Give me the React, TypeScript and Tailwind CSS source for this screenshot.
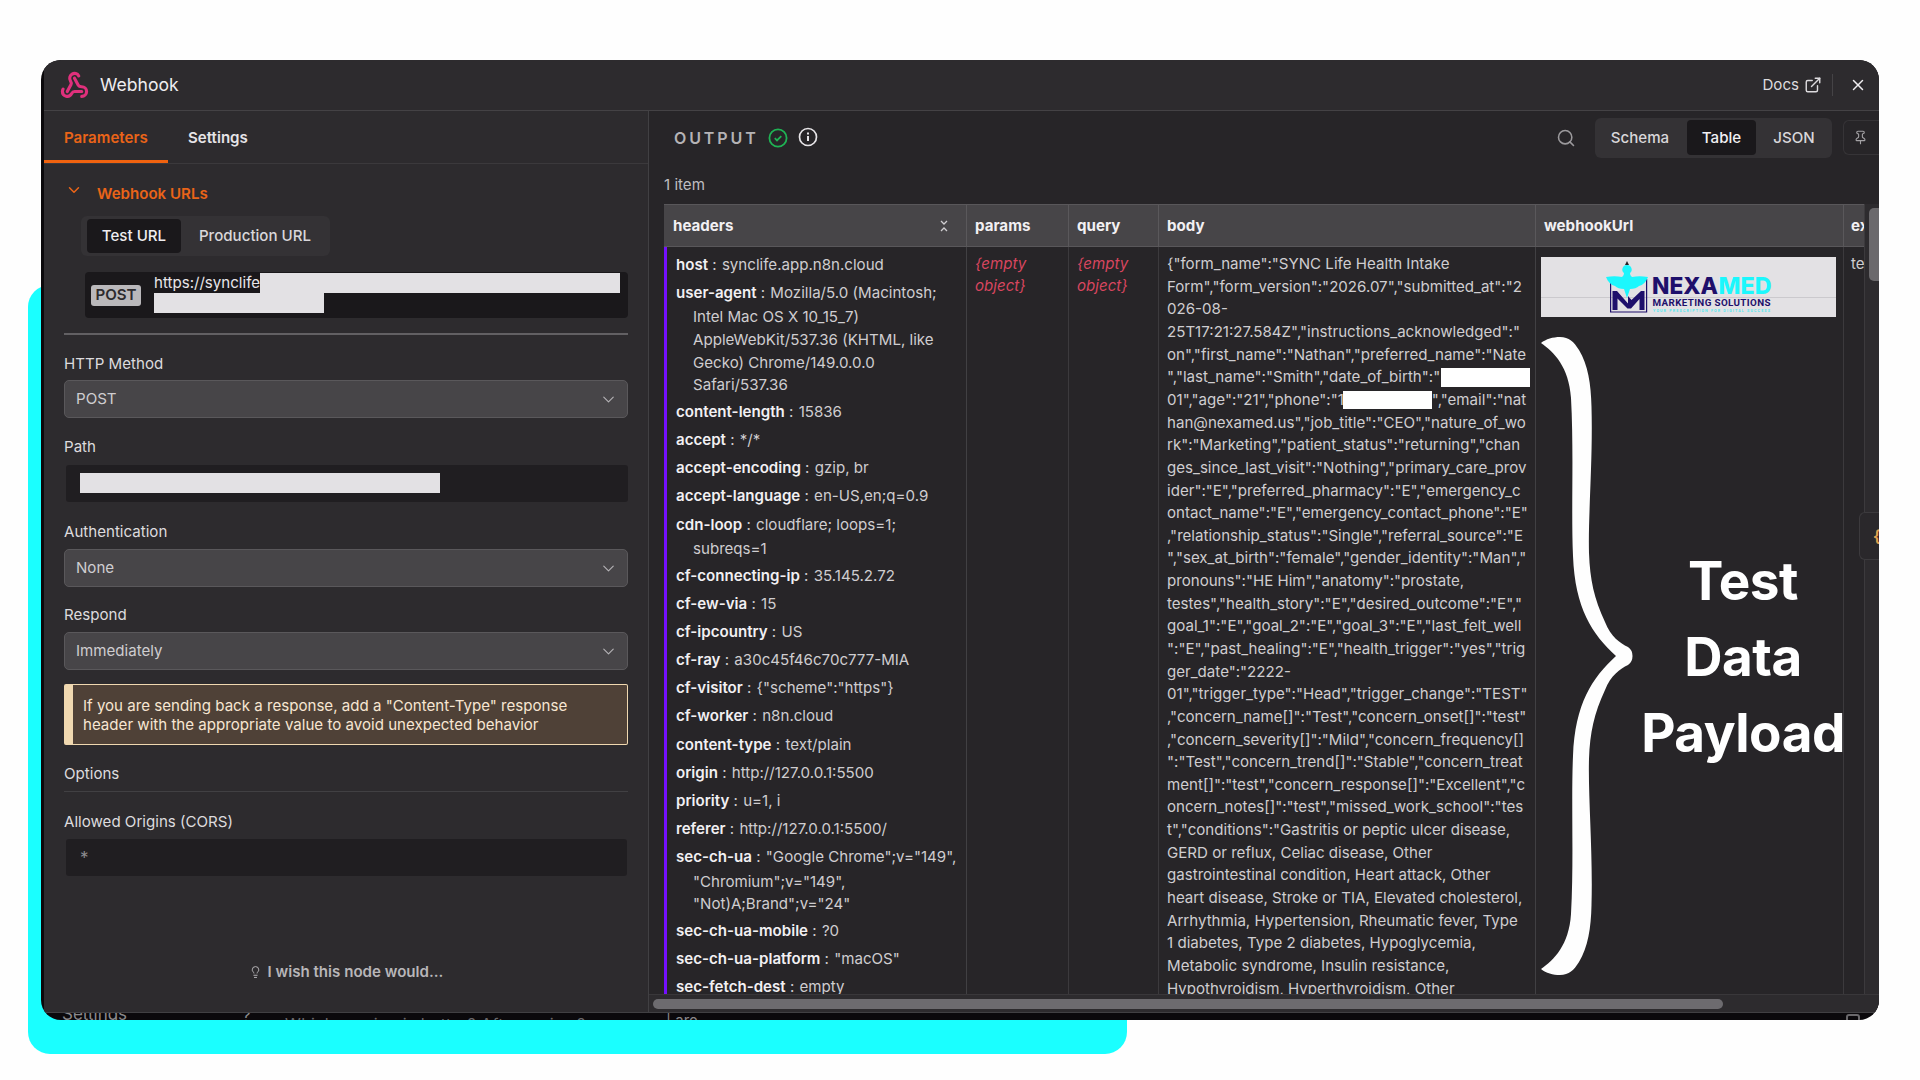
import type { ReactNode } from "react";
import { ChevronDown, ExternalLink, Lightbulb, Pin, Search, Webhook, X } from "lucide-react";
import clsx from "clsx";

const HEADERS: { key: string; lines: string[] }[] = [
  { key: "host", lines: ["synclife.app.n8n.cloud"] },
  { key: "user-agent", lines: ["Mozilla/5.0 (Macintosh;", "Intel Mac OS X 10_15_7)", "AppleWebKit/537.36 (KHTML, like", "Gecko) Chrome/149.0.0.0", "Safari/537.36"] },
  { key: "content-length", lines: ["15836"] },
  { key: "accept", lines: ["*/*"] },
  { key: "accept-encoding", lines: ["gzip, br"] },
  { key: "accept-language", lines: ["en-US,en;q=0.9"] },
  { key: "cdn-loop", lines: ["cloudflare; loops=1;", "subreqs=1"] },
  { key: "cf-connecting-ip", lines: ["35.145.2.72"] },
  { key: "cf-ew-via", lines: ["15"] },
  { key: "cf-ipcountry", lines: ["US"] },
  { key: "cf-ray", lines: ["a30c45f46c70c777-MIA"] },
  { key: "cf-visitor", lines: ['{"scheme":"https"}'] },
  { key: "cf-worker", lines: ["n8n.cloud"] },
  { key: "content-type", lines: ["text/plain"] },
  { key: "origin", lines: ["http://127.0.0.1:5500"] },
  { key: "priority", lines: ["u=1, i"] },
  { key: "referer", lines: ["http://127.0.0.1:5500/"] },
  { key: "sec-ch-ua", lines: ['"Google Chrome";v="149",', '"Chromium";v="149",', '"Not)A;Brand";v="24"'] },
  { key: "sec-ch-ua-mobile", lines: ["?0"] },
  { key: "sec-ch-ua-platform", lines: ['"macOS"'] },
  { key: "sec-fetch-dest", lines: ["empty"] },
];

const Redacted = ({ className }: { className: string }) => <span className={clsx("inline-block shrink-0", className)} />;

const BODY: ReactNode[] = [
  '{"form_name":"SYNC Life Health Intake',
  'Form","form_version":"2026.07","submitted_at":"2',
  "026-08-",
  '25T17:21:27.584Z","instructions_acknowledged":"',
  'on","first_name":"Nathan","preferred_name":"Nate',
  <>{'","last_name":"Smith","date_of_birth":"'}<Redacted className="ml-px h-[19px] w-[89px] bg-white" /></>,
  <>{'01","age":"21","phone":"1'}<Redacted className="-ml-px h-[18px] w-[89px] bg-white" />{'","email":"nat'}</>,
  'han@nexamed.us","job_title":"CEO","nature_of_wo',
  'rk":"Marketing","patient_status":"returning","chan',
  'ges_since_last_visit":"Nothing","primary_care_prov',
  'ider":"E","preferred_pharmacy":"E","emergency_c',
  'ontact_name":"E","emergency_contact_phone":"E"',
  ',"relationship_status":"Single","referral_source":"E',
  '","sex_at_birth":"female","gender_identity":"Man","',
  'pronouns":"HE Him","anatomy":"prostate,',
  'testes","health_story":"E","desired_outcome":"E","',
  'goal_1":"E","goal_2":"E","goal_3":"E","last_felt_well',
  '":"E","past_healing":"E","health_trigger":"yes","trig',
  'ger_date":"2222-',
  '01","trigger_type":"Head","trigger_change":"TEST"',
  ',"concern_name[]":"Test","concern_onset[]":"test"',
  ',"concern_severity[]":"Mild","concern_frequency[]',
  '":"Test","concern_trend[]":"Stable","concern_treat',
  'ment[]":"test","concern_response[]":"Excellent","c',
  'oncern_notes[]":"test","missed_work_school":"tes',
  't","conditions":"Gastritis or peptic ulcer disease,',
  "GERD or reflux, Celiac disease, Other",
  "gastrointestinal condition, Heart attack, Other",
  "heart disease, Stroke or TIA, Elevated cholesterol,",
  "Arrhythmia, Hypertension, Rheumatic fever, Type",
  "1 diabetes, Type 2 diabetes, Hypoglycemia,",
  "Metabolic syndrome, Insulin resistance,",
  "Hypothyroidism, Hyperthyroidism, Other",
];

function Label({ children, className }: { children: ReactNode; className: string }) {
  return <div className={clsx("flex h-5 items-center text-[#dddbde]", className)}>{children}</div>;
}

function Select({ value }: { value: string }) {
  return (
    <div className="flex h-[38px] items-center justify-between rounded-[5px] border border-[#5a585b] bg-[#474548] pr-[9px] pl-[11px] text-[#cfcdd0]">
      {value}
      <ChevronDown size={19} strokeWidth={1.4} className="text-[#b5b3b6]" />
    </div>
  );
}

function ParametersPanel() {
  return (
    <div className="flex w-[605px] shrink-0 flex-col border-r border-[#414043] bg-[#2d2b2e]">
      <div className="flex h-[53px] border-b border-[#3b393c] font-semibold">
        <div className="flex h-[52px] w-[124px] items-center border-b-[3px] border-[#f0620f] pt-1 pl-5 text-[#ea6418]">Parameters</div>
        <div className="flex h-[52px] items-center pt-px pl-5 text-[#e6e4e7]">Settings</div>
      </div>

      <div className="flex flex-col px-5">
        <div className="mt-5 flex h-5 items-center font-semibold text-[#ea6418]">
          <ChevronDown size={18} strokeWidth={2} className="mt-[-9px] ml-px" />
          <span className="ml-[14px]">Webhook URLs</span>
        </div>
        <div className="mt-3 ml-[17px] flex h-10 w-[249px] items-center rounded-md bg-[#343235] p-[6px] font-medium text-[#d9d7da]">
          <div className="flex h-[34px] w-[94px] items-center justify-center rounded bg-[#1a181b] text-[#efedf0]">Test URL</div>
          <div className="flex-1 pl-[5px] text-center">Production URL</div>
        </div>
        <div className="mt-4 ml-[21px] flex h-[46px] items-center rounded bg-[#1a181b] pl-[6px]">
          <div className="flex h-[21px] w-[50px] items-center justify-center rounded-[3px] bg-[#bab8bb] font-semibold text-[#2d2b2e]">POST</div>
          <div className="ml-[13px] h-full pt-px">
            <div className="flex h-5 items-center whitespace-pre text-[#e8e6e9]">
              https://synclife
              <Redacted className="h-5 w-[360px] bg-[#e3e1e4]" />
            </div>
            <div className="h-5 w-[170px] bg-[#e3e1e4]" />
          </div>
        </div>
        <div className="mt-[15px] h-[2px] bg-[#626063]" />

        <Label className="mt-[19px] mb-[6px]">HTTP Method</Label>
        <Select value="POST" />
        <Label className="mt-[19px] mb-2">Path</Label>
        <div className="ml-[2px] h-[37px] rounded-[3px] bg-[#201e21] pt-2 pl-[14px]">
          <div className="h-5 w-[360px] bg-[#e3e1e4]" />
        </div>
        <Label className="mt-5 mb-[7px]">Authentication</Label>
        <Select value="None" />
        <Label className="mt-[18px] mb-[7px]">Respond</Label>
        <Select value="Immediately" />

        <div className="mt-[14px] h-[61px] rounded-[2px] border border-l-[9px] border-[#f0d8b0] bg-[#4f4137] pt-[11px] pl-[10px] leading-[19px] whitespace-pre text-[#f7e6d2]">
          {'If you are sending back a response, add a "Content-Type" response\nheader with the appropriate value to avoid unexpected behavior'}
        </div>

        <Label className="mt-[19px] mb-[7px]">Options</Label>
        <div className="h-px bg-[#414043]" />
        <Label className="mt-5 mb-[7px]">Allowed Origins (CORS)</Label>
        <div className="mr-px ml-[2px] flex h-[37px] items-center rounded-[3px] bg-[#201e21] pl-[14px] text-[17px] text-[#8e8c8f]">*</div>
        <div className="mt-[86px] flex h-5 items-center justify-center gap-[6px] font-semibold text-[#b8b6b9]">
          <Lightbulb size={18} strokeWidth={1.8} className="w-[13px]" />
          I wish this node would...
        </div>
      </div>
    </div>
  );
}

function NexamedLogo() {
  return (
    <svg viewBox="0 0 295 60" className="block h-[60px] w-[295px]">
      <rect width="295" height="60" fill="#e3e1e4" />
      <path d="M0 40.5H295" stroke="#cbc9cd" strokeWidth="1" />
      <path d="M69.600 22V55H105.600V22" fill="none" stroke="#1e0f6b" strokeWidth="1.200" />
      <path d="M72 52V34.500h4.500L90 49.500" fill="none" stroke="#1e0f6b" strokeWidth="0" />
      <path d="M71.500 53V34h4.500l11 12.500V39l3.500 4L100 34h3.500v19h-5V42l-8.500 9.500h-3.500L76.500 41.500V53z" fill="#1e0f6b" />
      <path d="M84 8l2-4 2 4z" fill="#242126" />
      <path d="M86 8a4.500 4.500 0 0 1 3 8c0 2 1 3 2 4 5-1 10-1 16 0-2 5-5 8-9 9-2 2-5 3-9 3l-3 9-3-9c-4 0-7-1-9-3-4-1-7-4-9-9 6-1 11-1 16 0 1-1 2-2 2-4a4.500 4.500 0 0 1 3-8z" fill="#1cf7fd" />
      <text x="111" y="37" fontFamily="Inter, sans-serif" fontWeight="800" fontSize="23.500" textLength="66" lengthAdjust="spacingAndGlyphs" fill="#1e0f6b">NEXA</text>
      <text x="177.500" y="37" fontFamily="Inter, sans-serif" fontWeight="800" fontSize="23.500" textLength="53" lengthAdjust="spacingAndGlyphs" fill="#1cf7fd">MED</text>
      <text x="111.500" y="48.500" fontFamily="Roboto, sans-serif" fontWeight="700" fontSize="9.800" textLength="118" fill="#1e0f6b">MARKETING SOLUTIONS</text>
      <text x="112" y="54.500" fontFamily="Roboto, sans-serif" fontWeight="700" fontSize="3.600" textLength="117" fill="#4fe9f0">YOUR PRESCRIPTION FOR DIGITAL SUCCESS</text>
    </svg>
  );
}

const TH = ({ children, className }: { children: ReactNode; className: string }) => (
  <div className={clsx("flex shrink-0 items-center overflow-hidden border-r border-[#5a585b] pt-px", className)}>{children}</div>
);

function OutputTable() {
  return (
    <div className="flex w-[1201px] flex-col overflow-hidden border-r border-[#3c3a3d]">
      <div className="flex h-[43px] shrink-0 border-y border-[#59575a] bg-[#474548] font-bold text-[#f2f0f3]">
        <TH className="w-[303px] justify-between pr-[17px] pl-[9px]">
          headers
          <svg viewBox="0 0 10 12" className="h-3 w-[10px]" fill="none" stroke="#d0ced1" strokeWidth="1.300">
            <path d="M2 1l3 3 3-3M2 11l3-3 3 3" />
          </svg>
        </TH>
        <TH className="w-[102px] pl-2">params</TH>
        <TH className="w-[90px] pl-2">query</TH>
        <TH className="w-[377px] pl-2">body</TH>
        <TH className="w-[308px] pl-2">webhookUrl</TH>
        <div className="flex items-center pt-px pl-[7px]">ex</div>
      </div>
      <div className="flex h-[747px] text-[#cfcdd0]">
        <div className="w-[303px] shrink-0 overflow-hidden border-r border-l-[3px] border-r-[#414043] border-l-[#7410ff] pt-[4.800px] pl-[9px] whitespace-pre">
          {HEADERS.map(({ key, lines }) => (
            <div key={key} className="mb-[2px]">
              <div className="h-[26.200px] leading-[26.200px]">
                <span className="font-semibold text-[#f2f0f3]">{key}</span>
                <span className="mr-px"> : </span>
                {lines[0]}
              </div>
              {lines.slice(1).map((l) => (
                <div key={l} className="h-[22.700px] pl-[17px] leading-[22.700px]">{l}</div>
              ))}
            </div>
          ))}
        </div>
        <div className="w-[102px] shrink-0 border-r border-[#3c3a3d] pt-[5.800px] pl-2 leading-[22.650px] text-[#d8455f] italic">{"{empty"}<br />{"object}"}</div>
        <div className="w-[90px] shrink-0 border-r border-[#3c3a3d] pt-[5.800px] pl-2 leading-[22.650px] text-[#d8455f] italic">{"{empty"}<br />{"object}"}</div>
        <div className="w-[377px] shrink-0 overflow-hidden border-r border-[#414043] pt-[5.800px] pl-2">
          {BODY.map((line, i) => (
            <div key={i} className="flex h-[22.650px] items-center whitespace-pre">{line}</div>
          ))}
        </div>
        <div className="w-[308px] shrink-0 border-r border-[#3c3a3d] pt-[10px] pl-[5px]">
          <NexamedLogo />
        </div>
        <div className="pt-[5.800px] pl-[7px] leading-[22.650px]">te</div>
      </div>
    </div>
  );
}

function OutputPanel() {
  return (
    <div className="flex flex-1 flex-col overflow-hidden bg-[#272528]">
      <div className="flex h-[53px] items-center pl-[25px]">
        <span className="text-[16px] font-semibold tracking-[2.900px] text-[#b5b3b6]">OUTPUT</span>
        <svg viewBox="0 0 20 20" className="ml-[9px] h-5 w-5" fill="none" stroke="#1fb254" strokeWidth="1.800">
          <circle cx="10" cy="10" r="8.600" />
          <path d="M6.800 10.200l2.200 2.200 4.300-4.300" />
        </svg>
        <svg viewBox="0 0 20 20" className="mt-[-2px] ml-[10px] h-5 w-5" fill="none" stroke="#e6e4e7" strokeWidth="1.700">
          <circle cx="10" cy="10" r="8.500" />
          <path d="M10 9v5M10 5.500v2" strokeWidth="2" />
        </svg>
        <Search size={20} strokeWidth={1.900} className="ml-auto text-[#9b999c]" />
        <div className="ml-[19px] flex h-10 w-[237px] items-center rounded-md bg-[#343235] font-medium text-[#d9d7da]">
          <span className="w-[92px] pr-[2px] text-center">Schema</span>
          <span className="flex h-[35px] w-[69px] items-center justify-center rounded bg-[#1a181b] text-[#f2f0f3]">Table</span>
          <span className="flex-1 text-center">JSON</span>
        </div>
        <div className="ml-[11px] flex h-[35px] w-9 items-center rounded-l-md border border-r-0 border-[#363437] pl-[9px] text-[#a3a1a4]">
          <Pin size={15} strokeWidth={1.800} />
        </div>
      </div>
      <div className="flex h-10 items-center pt-[2px] pl-[15px] text-[#bfbdc0]">1 item</div>
      <div className="flex h-[790px] pl-[15px]">
        <OutputTable />
        <div className="flex-1 bg-[#2d2b2e] pt-[4px] pl-[4px]">
          <div className="h-[73px] rounded-l-[5px] bg-[#6b696c]" />
        </div>
      </div>
      <div className="flex h-[18px] items-center border-t border-[#39373a] bg-[#2d2b2e] pt-px pl-1">
        <div className="h-[10px] w-[1070px] rounded-full bg-[#6d6b6f]" />
      </div>
    </div>
  );
}

export default function App() {
  return (
    <div className="relative h-[1080px] w-[1920px] overflow-hidden bg-[#fefefe] pt-[60px] pl-[41px] font-['Inter',sans-serif] text-[15.100px] leading-5">
      <div className="absolute top-[285px] left-[28px] h-[769px] w-[1099px] rounded-[22px] bg-[#1affff]" />

      <div className="relative flex h-[960px] w-[1838px] flex-col overflow-hidden rounded-[20px] bg-[#0b090c] pl-[3px]">
        <div className="flex h-[51px] shrink-0 items-center border-b border-[#444245] bg-[#2d2b2e] pl-[16px] text-[#dddbde]">
          <Webhook size={29} strokeWidth={2.600} className="text-[#e0307c]" />
          <span className="ml-[11px] text-[17.600px] text-[#efedf0]">Webhook</span>
          <span className="ml-auto">Docs</span>
          <ExternalLink size={18} strokeWidth={1.900} className="ml-[5px]" />
          <div className="ml-[10px] h-[22px] w-px bg-[#454346]" />
          <X size={18} strokeWidth={2} className="mr-3 ml-4 text-[#efedf0]" />
        </div>
        <div className="flex h-[902px] shrink-0 border-b border-[#414043]">
          <ParametersPanel />
          <OutputPanel />
        </div>
        <div className="flex h-[7px] overflow-hidden text-[17px] leading-5 whitespace-pre text-[#8a888b]">
          <span className="mt-[-9px] ml-[18px] w-[180px]">Settings</span>
          <span className="mt-[-7px] w-[43px]">?</span>
          <span className="mt-px w-[381px] text-[16px] tracking-[0.400px] text-[#6a686b]">Which version is better? After review?</span>
          <span className="mt-[-2px] w-[1180px] text-[15px]">| are</span>
          <span className="mt-px h-3 w-[14px] rounded-[3px] border-2 border-[#6a686b]" />
        </div>

        {/* callout over the table */}
        <div className="absolute top-[452px] left-[1818px] flex h-[48px] w-5 items-center overflow-hidden rounded-l-md border border-r-0 border-[#3c3a3d] bg-[#2a282b] pl-[13px] text-[17px] font-semibold text-[#e0a050]">{"{"}</div>
        <svg viewBox="1541 336 92 640" className="absolute top-[276px] left-[1500px] h-[640px] w-[92px]" fill="#fefefe">
          <path d="M1541 343C1546 339 1553 337 1560 337C1569 337 1574 342 1579 350C1588 365 1591 384 1591.500 407C1593 460 1588 515 1589 553C1590 580 1594 598 1605 622C1611 637 1620 643 1628 647Q1632.500 650 1632.500 656Q1632.500 662 1628 665C1620 669 1611 675 1605 690C1594 714 1590 732 1589 759C1588 797 1593 852 1591.500 905C1591 928 1588 947 1579 962C1574 970 1569 975 1560 975C1553 975 1546 973 1541 969C1554 960 1569 945 1571 914C1574 860 1571 800 1573 756C1575 704 1592 678 1616 656C1592 634 1575 608 1573 556C1571 512 1574 452 1571 398C1569 367 1554 352 1541 343Z" />
        </svg>
        <div className="absolute top-[483px] left-[1582px] w-[240px] text-center text-[53px] leading-[76px] font-bold tracking-[-0.500px] text-white">
          Test
          <br />
          Data
          <br />
          Payload
        </div>
      </div>
    </div>
  );
}
